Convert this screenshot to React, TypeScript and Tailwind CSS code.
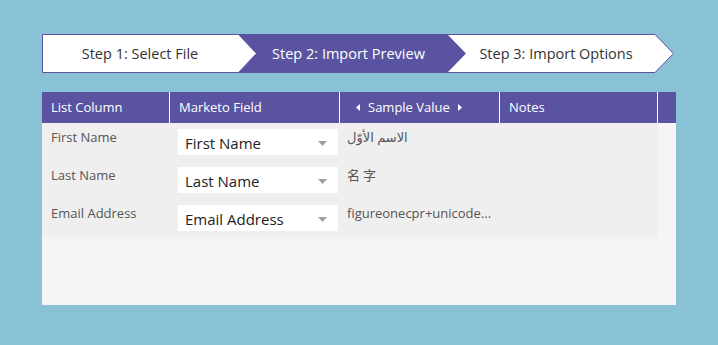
const PURPLE = "#5a53a1";

const rows = [
  { label: "First Name", field: "First Name", sample: "الاسم الأوّل" },
  { label: "Last Name", field: "Last Name", sample: "名字" },
  { label: "Email Address", field: "Email Address", sample: "figureonecpr+unicode..." },
];

function Steps() {
  return (
    <div className="flex h-[39px] w-[632px]">
      <div className="relative z-30 flex h-full w-[215px] items-center">
        <svg className="absolute inset-0" width="215" height="39">
          <polygon points="0.5,0.5 196.5,0.5 214.5,19.5 196.5,38.5 0.5,38.5" fill="#fff" stroke={PURPLE} />
        </svg>
        <span className="relative w-[196px] text-center text-[14.5px] text-[#333]">Step 1: Select File</span>
      </div>
      <div className="relative z-20 ml-[-19px] flex h-full w-[228px] items-center">
        <svg className="absolute inset-0" width="228" height="39">
          <polygon points="0,0 209,0 228,19.5 209,39 0,39" fill={PURPLE} />
        </svg>
        <span className="relative ml-[12px] w-[197px] text-center text-[14.5px] text-white">Step 2: Import Preview</span>
      </div>
      <div className="relative z-10 ml-[-19px] flex h-full w-[227px] items-center">
        <svg className="absolute inset-0" width="227" height="39">
          <polygon points="0,0.5 208,0.5 226.5,19.5 208,38.5 0,38.5" fill="#fff" stroke={PURPLE} />
        </svg>
        <span className="relative ml-[10px] w-[198px] text-center text-[14.5px] text-[#333]">Step 3: Import Options</span>
      </div>
    </div>
  );
}

function Caret({ dir }: { dir: "l" | "r" }) {
  return (
    <svg width="4" height="7" viewBox="0 0 4 7" className="shrink-0">
      {dir === "l" ? <polygon points="4,0 0,3.5 4,7" fill="#fff" /> : <polygon points="0,0 4,3.5 0,7" fill="#fff" />}
    </svg>
  );
}

export default function App() {
  return (
    <div
      className="h-[345px] w-[718px] bg-[#89c2d4] pl-[42px] pt-[34px]"
      style={{ fontFamily: '"Open Sans", "DejaVu Sans", "Noto Sans CJK SC", sans-serif' }}
    >
      <Steps />
      <div className="mt-[19px] h-[213px] w-[634px] bg-[#f5f5f5]">
        <div className="flex h-[31px] bg-[#5a53a1] text-[13px] font-medium text-white">
          <div className="flex w-[128px] items-center border-r border-white pl-[9px]">List Column</div>
          <div className="flex w-[170px] items-center border-r border-white pl-[9px]">Marketo Field</div>
          <div className="flex w-[160px] items-center gap-[8px] border-r border-white pl-[16px]">
            <Caret dir="l" />
            <span>Sample Value</span>
            <Caret dir="r" />
          </div>
          <div className="flex w-[158px] items-center border-r border-white pl-[9px]">Notes</div>
        </div>
        <div className="w-[616px] bg-[#efefef]">
          {rows.map((r) => (
            <div key={r.label} className="flex h-[38px] text-[13px] text-[#555]">
              <div className="w-[128px] pl-[9px] pt-[5px]">{r.label}</div>
              <div className="w-[170px] pl-[8px] pt-[6px]">
                <div className="flex h-[26px] w-[160px] items-center justify-between bg-white pl-[7px] pr-[11px] pt-[3px] text-[15px] text-[#222]">
                  <span>{r.field}</span>
                  <svg width="9" height="5" viewBox="0 0 9 5">
                    <polygon points="0,0 9,0 4.5,5" fill="#a0a0a0" />
                  </svg>
                </div>
              </div>
              <div className="w-[160px] pl-[7px] pt-[5px]">
                <span className={r.sample === "名字" ? "tracking-[3px]" : ""}>{r.sample}</span>
              </div>
              <div className="w-[158px]" />
            </div>
          ))}
        </div>
      </div>
    </div>
  );
}
